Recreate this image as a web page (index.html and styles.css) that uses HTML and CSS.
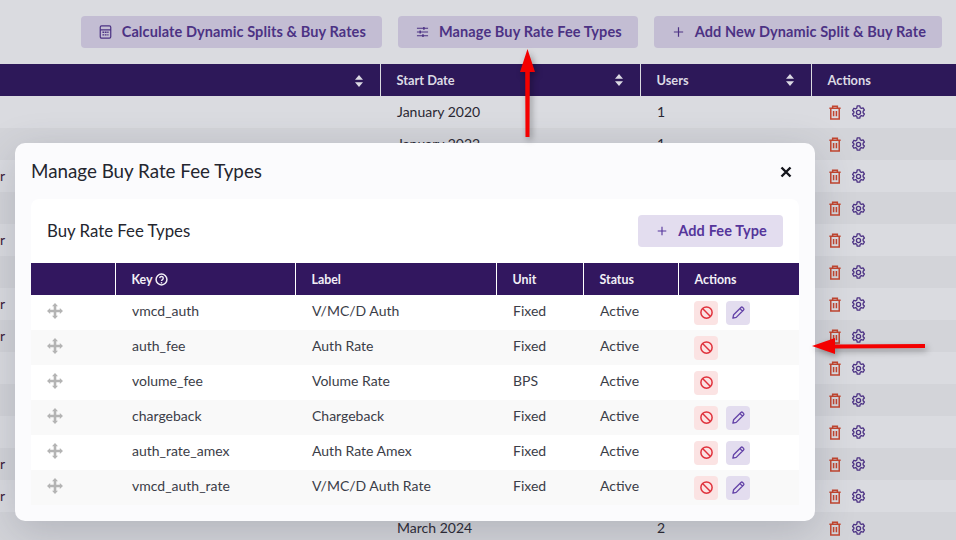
FILE: index.html
```html
<!DOCTYPE html>
<html lang="en">
<head>
    <meta charset="UTF-8">
    <title>Dynamic Splits</title>
    <link rel="stylesheet" href="styles.css">
</head>
<body>
<svg class="icon-defs" width="0" height="0">
    <symbol id="iTrash" viewBox="0 0 14 16">
        <path d="M1 3.500h12M4.500 3V1.200h5V3M2.500 3.500v11.300h9V3.500M5.500 6.500v5.500M8.500 6.500v5.500" fill="none" stroke="currentColor" stroke-width="1.600"/>
    </symbol>
    <symbol id="iGear" viewBox="0 0 16 16">
        <path d="M6.600 1h2.800l.4 1.900 1.300.7 1.800-.6 1.400 2.400-1.400 1.300v1.600l1.400 1.300-1.400 2.400-1.800-.6-1.300.7-.4 1.900H6.600l-.4-1.900-1.300-.7-1.800.6-1.400-2.400 1.400-1.300V7.200L1.700 5.900l1.400-2.400 1.800.6 1.300-.7z" fill="none" stroke="currentColor" stroke-width="1.400" stroke-linejoin="round"/>
        <circle cx="8" cy="8" r="2.200" fill="none" stroke="currentColor" stroke-width="1.400"/>
    </symbol>
    <symbol id="iBan" viewBox="0 0 16 16">
        <circle cx="8" cy="8" r="6" fill="none" stroke="currentColor" stroke-width="1.600"/>
        <path d="M3.800 3.800l8.400 8.400" fill="none" stroke="currentColor" stroke-width="1.600"/>
    </symbol>
    <symbol id="iPencil" viewBox="0 0 16 16">
        <path d="M2 14l.8-3.600L10.600 2.600a1.300 1.300 0 0 1 1.800 0l1 1a1.300 1.300 0 0 1 0 1.800L5.600 13.200zM9.500 3.800l2.700 2.700" fill="none" stroke="currentColor" stroke-width="1.400" stroke-linejoin="round"/>
    </symbol>
    <symbol id="iMove" viewBox="0 0 16 16">
        <path d="M8 0l3 3.200H9.300V6.700h3.500V5l3.200 3-3.200 3V9.300H9.300v3.500H11L8 16l-3-3.200h1.700V9.300H3.200V11L0 8l3.200-3v1.700h3.500V3.200H5z" fill="currentColor"/>
    </symbol>
    <symbol id="iSort" viewBox="0 0 8 12">
        <path d="M4 0l4 4.800H0zM4 12l4-4.800H0z" fill="currentColor"/>
    </symbol>
</svg>

<div class="toolbar">
    <button class="btn-soft" type="button">
        <svg class="btn-soft__icon" viewBox="0 0 14 16"><path d="M2.500 1h9A1.500 1.500 0 0 1 13 2.500v11a1.500 1.500 0 0 1-1.500 1.500h-9A1.500 1.500 0 0 1 1 13.500v-11A1.500 1.500 0 0 1 2.500 1zM1 5.500h12" fill="none" stroke="currentColor" stroke-width="1.400"/><path d="M3.500 7.500h2v1.500h-2zM6.250 7.500h2v1.500h-2zM9 7.500h1.500v1.500H9zM3.500 10.500h2V12h-2zM6.250 10.500h2V12h-2zM9 10.500h1.500V12H9z" fill="currentColor"/></svg>
        Calculate Dynamic Splits &amp; Buy Rates
    </button>
    <button class="btn-soft" type="button">
        <svg class="btn-soft__icon" viewBox="0 0 14 14"><path d="M1 3h12M1 7h12M1 11h12" fill="none" stroke="currentColor" stroke-width="1.200"/><path d="M8.500 1.500v3M4.500 5.500v3M7.500 9.500v3" fill="none" stroke="currentColor" stroke-width="1.600"/></svg>
        Manage Buy Rate Fee Types
    </button>
    <button class="btn-soft" type="button">
        <svg class="btn-soft__icon" viewBox="0 0 14 14"><path d="M7 2v10M2 7h10" fill="none" stroke="currentColor" stroke-width="1.300"/></svg>
        Add New Dynamic Split &amp; Buy Rate
    </button>
</div>

<table class="splits">
    <colgroup>
        <col class="splits__name"><col class="splits__date"><col class="splits__users"><col>
    </colgroup>
    <thead>
        <tr>
            <th><svg class="sort"><use href="#iSort"/></svg></th>
            <th>Start Date<svg class="sort"><use href="#iSort"/></svg></th>
            <th>Users<svg class="sort"><use href="#iSort"/></svg></th>
            <th>Actions</th>
        </tr>
    </thead>
    <tbody>
        <tr><td></td><td>January 2020</td><td>1</td><td><svg class="act-trash"><use href="#iTrash"/></svg><svg class="act-gear"><use href="#iGear"/></svg></td></tr>
        <tr><td></td><td>January 2022</td><td>1</td><td><svg class="act-trash"><use href="#iTrash"/></svg><svg class="act-gear"><use href="#iGear"/></svg></td></tr>
        <tr><td>r</td><td></td><td></td><td><svg class="act-trash"><use href="#iTrash"/></svg><svg class="act-gear"><use href="#iGear"/></svg></td></tr>
        <tr><td></td><td></td><td></td><td><svg class="act-trash"><use href="#iTrash"/></svg><svg class="act-gear"><use href="#iGear"/></svg></td></tr>
        <tr><td>r</td><td></td><td></td><td><svg class="act-trash"><use href="#iTrash"/></svg><svg class="act-gear"><use href="#iGear"/></svg></td></tr>
        <tr><td></td><td></td><td></td><td><svg class="act-trash"><use href="#iTrash"/></svg><svg class="act-gear"><use href="#iGear"/></svg></td></tr>
        <tr><td>r</td><td></td><td></td><td><svg class="act-trash"><use href="#iTrash"/></svg><svg class="act-gear"><use href="#iGear"/></svg></td></tr>
        <tr><td>r</td><td></td><td></td><td><svg class="act-trash"><use href="#iTrash"/></svg><svg class="act-gear"><use href="#iGear"/></svg></td></tr>
        <tr><td></td><td></td><td></td><td><svg class="act-trash"><use href="#iTrash"/></svg><svg class="act-gear"><use href="#iGear"/></svg></td></tr>
        <tr><td></td><td></td><td></td><td><svg class="act-trash"><use href="#iTrash"/></svg><svg class="act-gear"><use href="#iGear"/></svg></td></tr>
        <tr><td></td><td></td><td></td><td><svg class="act-trash"><use href="#iTrash"/></svg><svg class="act-gear"><use href="#iGear"/></svg></td></tr>
        <tr><td>r</td><td></td><td></td><td><svg class="act-trash"><use href="#iTrash"/></svg><svg class="act-gear"><use href="#iGear"/></svg></td></tr>
        <tr><td>r</td><td></td><td></td><td><svg class="act-trash"><use href="#iTrash"/></svg><svg class="act-gear"><use href="#iGear"/></svg></td></tr>
        <tr><td></td><td>March 2024</td><td>2</td><td><svg class="act-trash"><use href="#iTrash"/></svg><svg class="act-gear"><use href="#iGear"/></svg></td></tr>
    </tbody>
</table>

<div class="modal">
    <div class="modal__head">
        <h2 class="modal__title">Manage Buy Rate Fee Types</h2>
        <svg class="modal__close" viewBox="0 0 12 12"><path d="M1.500 1.500l9 9M10.500 1.500l-9 9" fill="none" stroke="currentColor" stroke-width="2.400"/></svg>
    </div>
    <div class="fee-card">
        <div class="fee-card__head">
            <h3 class="fee-card__title">Buy Rate Fee Types</h3>
            <button class="btn-add" type="button">
                <svg class="btn-add__icon" viewBox="0 0 14 14"><path d="M7 2v10M2 7h10" fill="none" stroke="currentColor" stroke-width="1.300"/></svg>
                Add Fee Type
            </button>
        </div>
        <table class="fees">
            <colgroup>
                <col class="fees__drag"><col class="fees__key"><col class="fees__label"><col class="fees__unit"><col class="fees__status"><col>
            </colgroup>
            <thead>
                <tr>
                    <th></th>
                    <th>Key <svg class="fees__help" viewBox="0 0 12 12"><circle cx="6" cy="6" r="5" fill="none" stroke="currentColor" stroke-width="1.400"/><path d="M4.400 4.700a1.600 1.600 0 1 1 2.500 1.400c-.6.400-.9.600-.9 1.200" fill="none" stroke="currentColor" stroke-width="1.300"/><circle cx="6" cy="9" r=".8" fill="currentColor"/></svg></th>
                    <th>Label</th>
                    <th>Unit</th>
                    <th>Status</th>
                    <th>Actions</th>
                </tr>
            </thead>
            <tbody>
                <tr>
                    <td><svg class="fees__move"><use href="#iMove"/></svg></td>
                    <td>vmcd_auth</td><td>V/MC/D Auth</td><td>Fixed</td><td>Active</td>
                    <td><div class="row-btns"><span class="row-btn row-btn--ban"><svg><use href="#iBan"/></svg></span><span class="row-btn row-btn--edit"><svg><use href="#iPencil"/></svg></span></div></td>
                </tr>
                <tr>
                    <td><svg class="fees__move"><use href="#iMove"/></svg></td>
                    <td>auth_fee</td><td>Auth Rate</td><td>Fixed</td><td>Active</td>
                    <td><div class="row-btns"><span class="row-btn row-btn--ban"><svg><use href="#iBan"/></svg></span></div></td>
                </tr>
                <tr>
                    <td><svg class="fees__move"><use href="#iMove"/></svg></td>
                    <td>volume_fee</td><td>Volume Rate</td><td>BPS</td><td>Active</td>
                    <td><div class="row-btns"><span class="row-btn row-btn--ban"><svg><use href="#iBan"/></svg></span></div></td>
                </tr>
                <tr>
                    <td><svg class="fees__move"><use href="#iMove"/></svg></td>
                    <td>chargeback</td><td>Chargeback</td><td>Fixed</td><td>Active</td>
                    <td><div class="row-btns"><span class="row-btn row-btn--ban"><svg><use href="#iBan"/></svg></span><span class="row-btn row-btn--edit"><svg><use href="#iPencil"/></svg></span></div></td>
                </tr>
                <tr>
                    <td><svg class="fees__move"><use href="#iMove"/></svg></td>
                    <td>auth_rate_amex</td><td>Auth Rate Amex</td><td>Fixed</td><td>Active</td>
                    <td><div class="row-btns"><span class="row-btn row-btn--ban"><svg><use href="#iBan"/></svg></span><span class="row-btn row-btn--edit"><svg><use href="#iPencil"/></svg></span></div></td>
                </tr>
                <tr>
                    <td><svg class="fees__move"><use href="#iMove"/></svg></td>
                    <td>vmcd_auth_rate</td><td>V/MC/D Auth Rate</td><td>Fixed</td><td>Active</td>
                    <td><div class="row-btns"><span class="row-btn row-btn--ban"><svg><use href="#iBan"/></svg></span><span class="row-btn row-btn--edit"><svg><use href="#iPencil"/></svg></span></div></td>
                </tr>
            </tbody>
        </table>
    </div>
</div>

<svg class="arrow arrow--up" viewBox="0 0 15 88"><path d="M7.500 0L15 23H9.800L9.500 88H5.500L5.200 23H0z" fill="#f40000"/></svg>
<svg class="arrow arrow--left" viewBox="0 0 113 16"><path d="M0 8L23 0V6.500L113 6V10L23 10.500V16z" fill="#f40000"/></svg>
</body>
</html>
```

FILE: styles.css
```css
html {
    height: 100%;
}

body {
    margin: 0;
    height: 100%;
    overflow: hidden;
    background-color: #dadbe0;
    color: #2a2833;
    font-family: "Lato", "Liberation Sans", sans-serif;
    font-size: 14px;
}

.icon-defs {
    position: absolute;
}

.toolbar {
    display: flex;
    justify-content: flex-end;
    gap: 16px;
    height: 32px;
    padding: 16px 14px 16px 0;
}

.btn-soft {
    display: flex;
    align-items: center;
    gap: 10px;
    height: 32px;
    padding: 0 16px 2px 18px;
    border: 0;
    border-radius: 4px;
    background-color: #c3bdd3;
    color: #4c3284;
    font: inherit;
    font-size: 14.5px;
    font-weight: 700;
    letter-spacing: 0.1px;
}
.btn-soft__icon {
    width: 13px;
    height: 14px;
    margin-top: 2px;
}

.splits {
    width: 956px;
    table-layout: fixed;
    border-collapse: collapse;
}
.splits__name {
    width: 380px;
}
.splits__date {
    width: 260px;
}
.splits__users {
    width: 171px;
}
.splits th {
    box-sizing: border-box;
    height: 32px;
    padding: 0 17px 0 16px;
    background-color: #2d1859;
    color: #dcdae4;
    font-size: 12.8px;
    font-weight: 700;
    text-align: left;
    border-left: 1px solid #dadbe0;
}
.splits th:first-child {
    border-left: 0;
    text-align: right;
}
.splits td {
    box-sizing: border-box;
    height: 32px;
    padding: 0 16px 2px 17px;
    line-height: 29px;
    white-space: nowrap;
}
.splits td:first-child {
    padding: 0 0 2px;
    color: #3d1838;
}
.splits tbody tr:nth-child(even) {
    background-color: #d3d4d9;
}
.sort {
    float: right;
    width: 8px;
    height: 12px;
    margin-top: 2px;
    color: #dcdae4;
}
.act-trash,
.act-gear {
    width: 14px;
    height: 15px;
    vertical-align: -3px;
}
.act-trash {
    margin-right: 9px;
    color: #c2452f;
}
.act-gear {
    width: 15px;
    color: #4c3284;
}

.modal {
    position: absolute;
    left: 15px;
    top: 143px;
    width: 800px;
    height: 378px;
    background-color: #fbfbfd;
    border-radius: 10px;
    box-shadow: 0 10px 40px rgba(60, 64, 80, 0.22);
}
.modal__head {
    display: flex;
    justify-content: space-between;
    align-items: center;
    height: 54px;
    padding: 0 23px 2px 16px;
}
.modal__title {
    margin: 0;
    font-size: 18.8px;
    font-weight: 400;
    color: #24262f;
}
.modal__close {
    width: 12px;
    height: 12px;
    margin-top: 3px;
    color: #14151c;
}

.fee-card {
    margin: 0 16px;
    background-color: #fff;
    border-radius: 8px 8px 0 0;
}
.fee-card__head {
    display: flex;
    justify-content: space-between;
    align-items: center;
    height: 64px;
    padding: 0 16px;
}
.fee-card__title {
    margin: -2px 0 0;
    font-size: 16.8px;
    font-weight: 400;
    color: #24262f;
}
.btn-add {
    display: flex;
    align-items: center;
    gap: 10px;
    height: 32px;
    padding: 0 16px 2px 18px;
    border: 0;
    border-radius: 4px;
    background-color: #e3ddef;
    color: #55359b;
    font: inherit;
    font-size: 14.5px;
    font-weight: 700;
    letter-spacing: 0.14px;
}
.btn-add__icon {
    width: 12px;
    height: 12px;
    margin-top: 2px;
}

.fees {
    width: 768px;
    table-layout: fixed;
    border-collapse: collapse;
}
.fees__drag {
    width: 84px;
}
.fees__key {
    width: 180px;
}
.fees__label {
    width: 201px;
}
.fees__unit {
    width: 87px;
}
.fees__status {
    width: 95px;
}
.fees th {
    box-sizing: border-box;
    height: 32px;
    padding: 0 16px;
    background-color: #32175f;
    color: #f1eff6;
    font-size: 12.4px;
    font-weight: 700;
    text-align: left;
    border-left: 1px solid #fff;
}
.fees th:first-child {
    border-left: 0;
}
.fees td {
    box-sizing: border-box;
    height: 35px;
    padding: 0 16px 5px 17px;
    color: #3b3d48;
    white-space: nowrap;
}
.fees td:first-child {
    padding: 0 16px 3px;
}
.fees td:last-child {
    padding: 0 0 0 16px;
}
.fees__help {
    width: 13px;
    height: 13px;
    vertical-align: -2px;
}
.fees tbody tr:nth-child(even) {
    background-color: #f9f9f9;
}
.fees__move {
    display: block;
    width: 16px;
    height: 16px;
    color: #b4b4b4;
}

.row-btns {
    display: flex;
    gap: 8px;
}
.row-btn {
    display: flex;
    justify-content: center;
    align-items: center;
    width: 24px;
    height: 24px;
    border-radius: 4px;
}
.row-btn svg {
    width: 15px;
    height: 15px;
}
.row-btn--ban {
    background-color: #fbe3e3;
    color: #e0323c;
}
.row-btn--edit {
    background-color: #e3ddef;
    color: #6443a8;
}

.arrow {
    position: absolute;
    filter: drop-shadow(2px 3px 3px rgba(0, 0, 0, 0.35));
}
.arrow--up {
    left: 520px;
    top: 49px;
    width: 15px;
    height: 88px;
}
.arrow--left {
    left: 812px;
    top: 338px;
    width: 113px;
    height: 16px;
}
```
